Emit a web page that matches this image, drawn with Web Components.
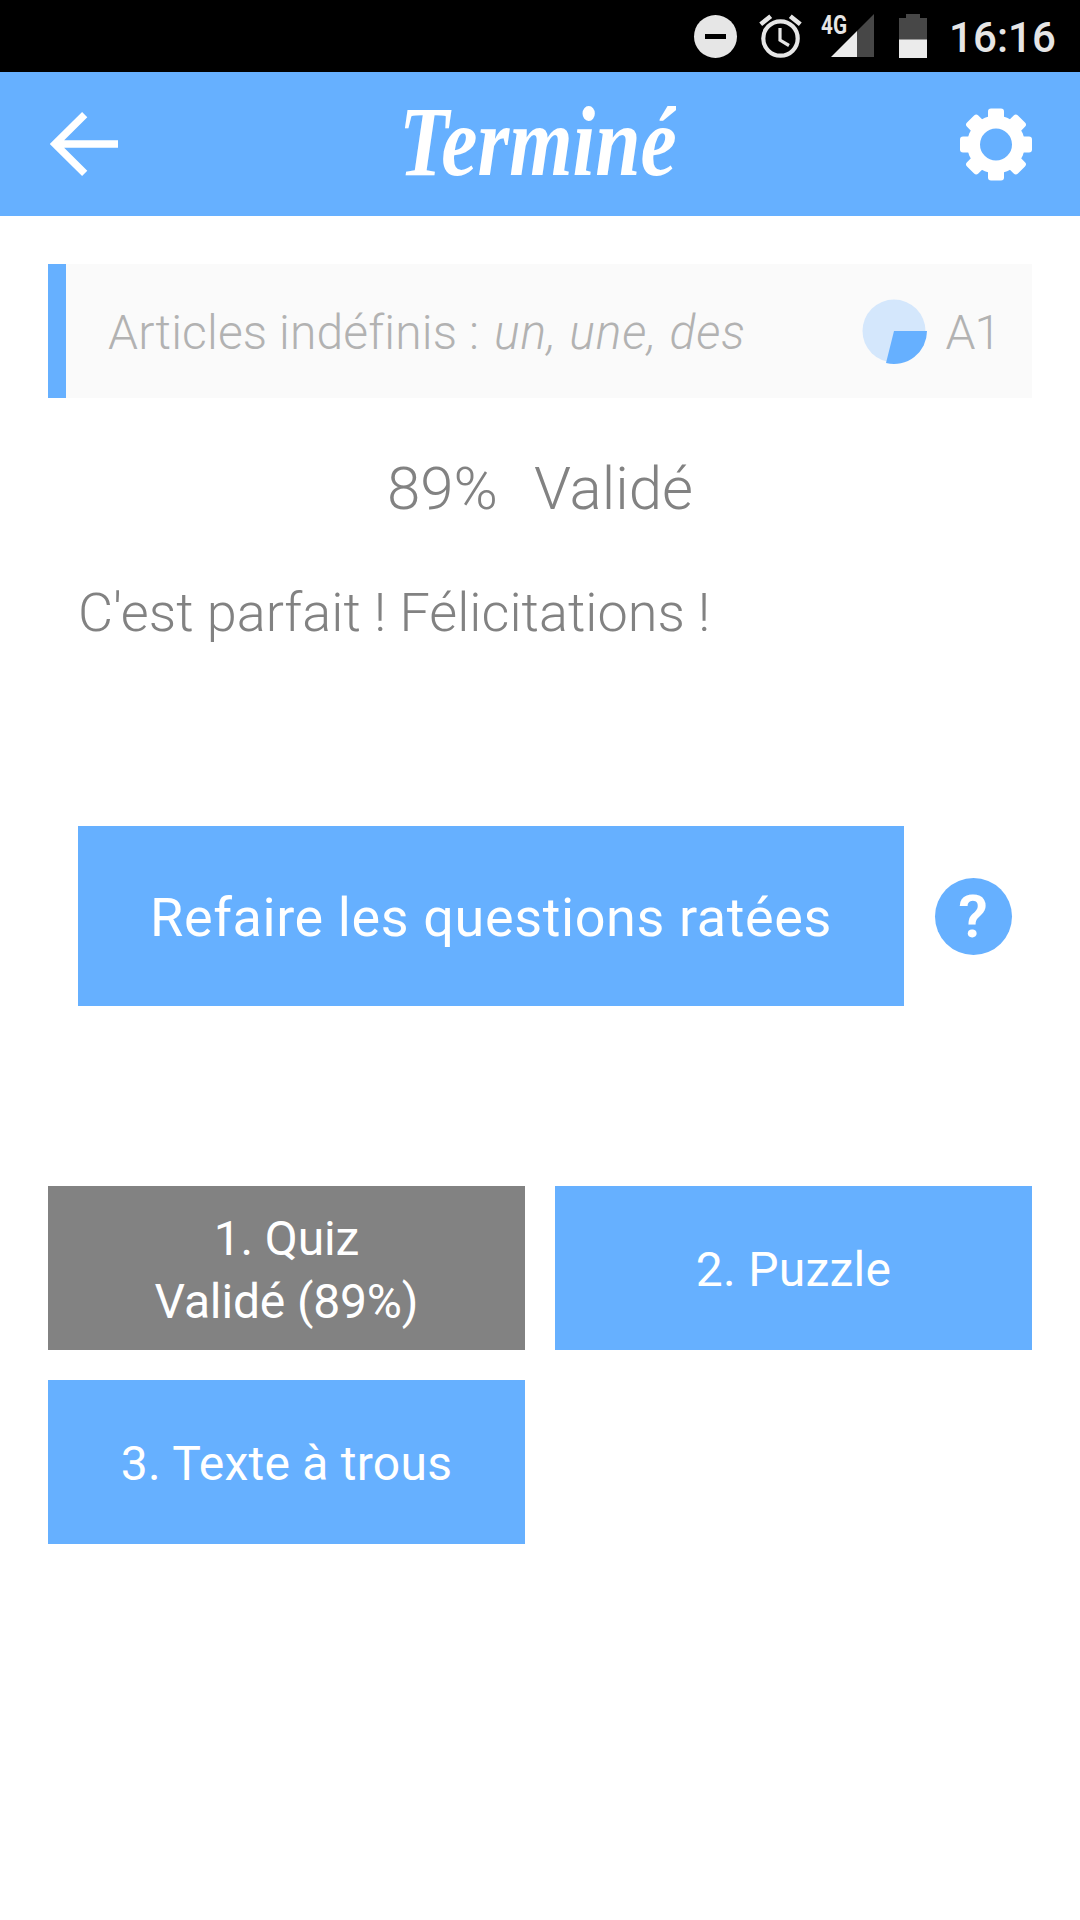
<!DOCTYPE html>
<html lang="fr">
<head>
<meta charset="utf-8">
<title>Terminé</title>
<style>
html,body{margin:0;background:#fff}
body{font-family:Roboto,"Noto Sans",sans-serif}
</style>
</head>
<body>
<quiz-screen></quiz-screen>
<script>
const define = (name, html) => {
  const t = document.createElement('template');
  t.innerHTML = html;
  customElements.define(name, class extends HTMLElement {
    constructor() {
      super();
      this.attachShadow({ mode: 'open' }).append(t.content.cloneNode(true));
    }
  });
};

define('status-bar', `
<style>
:host{display:flex;box-sizing:border-box;height:72px;background:#000;color:#e6e6e6;justify-content:flex-end;align-items:stretch;padding-right:24px}
svg{display:block;flex:none}
.time{width:107px;font-size:42px;line-height:75px;font-weight:500;letter-spacing:.1px;white-space:nowrap;margin-left:22px}
</style>
<svg width="247" height="72" viewBox="680 0 247 72">
<circle cx="715.5" cy="36.5" r="21.5" fill="#e6e6e6"/><rect x="705" y="34" width="21" height="5" fill="#000"/>
<g fill="none" stroke="#e6e6e6"><circle cx="780.5" cy="38.5" r="17.2" stroke-width="4.2"/><path d="M780 28v12.2l9 5.300" stroke-width="3.2"/><path d="M760.700 24.300l10-8M800.300 24.300l-10-8" stroke-width="4.6"/></g>
<path d="M874 14v43h-17V31z" fill="#474747"/><path d="M831 57h26V31z" fill="#ebebeb"/>
<text x="821" y="33.5" font-family="Roboto" font-weight="700" font-size="26" textLength="26" lengthAdjust="spacingAndGlyphs" fill="#e6e6e6">4G</text>
<path d="M899 40V18h7v-4h14v4h7v22z" fill="#474747"/><path d="M899 39.500h28V58h-28z" fill="#ebebeb"/>
</svg>
<span class="time">16:16</span>`);

define('app-header', `
<style>
:host{display:flex;box-sizing:border-box;height:144px;padding:0 48px 0 50px;background:#66b0ff;color:#fff;align-items:center;justify-content:space-between}
svg{display:block;flex:none}
h1{margin:0 0 0 2px;width:272px;height:100px;overflow:hidden;font:italic 700 100px/96px "Liberation Serif",serif;white-space:nowrap}
h1 span{display:block;width:max-content;transform:scaleX(.815);transform-origin:0 50%;margin-left:-5px}
</style>
<svg width="68" height="66" viewBox="50 111 68 66"><path d="M118 144H56M84.700 114.700L55 144l29.700 29.300" fill="none" stroke="#fff" stroke-width="7.400"/></svg>
<h1><span><slot></slot></span></h1>
<svg width="72" height="72" viewBox="-36 -36.500 72 72" overflow="visible" fill="#fff"><path fill-rule="evenodd" d="M0-29a29 29 0 1 0 0 58a29 29 0 1 0 0-58zM0-16a16 16 0 1 1 0 32a16 16 0 1 1 0-32z"/><g><rect x="-8" y="-36" width="16" height="16" rx="3"/><rect x="-8" y="20" width="16" height="16" rx="3"/><rect x="-36" y="-8" width="16" height="16" rx="3"/><rect x="20" y="-8" width="16" height="16" rx="3"/></g><g transform="rotate(45)"><rect x="-8" y="-36" width="16" height="16" rx="3"/><rect x="-8" y="20" width="16" height="16" rx="3"/><rect x="-36" y="-8" width="16" height="16" rx="3"/><rect x="20" y="-8" width="16" height="16" rx="3"/></g></svg>`);

define('lesson-card', `
<style>
:host{display:flex;box-sizing:border-box;height:134px;border-left:18px solid #66b0ff;background:#fafafa;color:#b2b2b2;font-size:48px;font-weight:300;line-height:60px;padding:0 32px 0 42px;align-items:center;white-space:nowrap}
.title{flex:1;padding-top:3px;letter-spacing:.13px}
::slotted(em){letter-spacing:.9px;margin-left:3px}
.level{padding-top:3px;letter-spacing:-1px}
svg{display:block;flex:none;margin-right:17px}
</style>
<span class="title"><slot></slot></span>
<svg width="66" height="68" viewBox="862 297 66 68"><circle cx="894" cy="331" r="31.500" fill="#d4e7fc"/><path d="M894 331h33a33 33 0 0 1-41 32z" fill="#66b0ff"/></svg>
<span class="level"><slot name="level"></slot></span>`);

define('action-tile', `
<style>
:host{display:flex;box-sizing:border-box;padding-top:3px;background:#66b0ff;color:#fff;font-size:48px;line-height:63px;letter-spacing:.25px;text-align:center;align-items:center;justify-content:center;white-space:nowrap}
:host([done]){background:#828282;letter-spacing:-.15px}
</style>
<span><slot></slot></span>`);

define('help-badge', `
<style>
:host{display:flex;width:77px;height:77px;border-radius:50%;background:#66b0ff;color:#fff;align-items:center;justify-content:center;font-size:60px;font-weight:600;line-height:77px}
</style>
<slot></slot>`);

define('quiz-screen', `
<style>
:host{display:flex;flex-direction:column;width:1080px;height:1920px;background:#fff;color:#828282;overflow:hidden}
main{display:flex;flex-direction:column;padding:48px 48px 0}
.score{display:flex;justify-content:center;gap:36px;margin-top:51px;font-size:60px;font-weight:300;line-height:80px}
.message{margin:48px 0 0 30px;font-size:54px;font-weight:300;line-height:72px;letter-spacing:.03px;white-space:pre}
.retry{display:flex;align-items:center;gap:30.5px;margin:177px 0 0 30px}
.retry action-tile{width:826px;height:180px;padding-top:3px;font-size:54px;letter-spacing:.6px}
.grid{display:grid;grid-template-columns:477px 477px;grid-auto-rows:164px;gap:30px;margin-top:180px}
</style>
<status-bar></status-bar>
<app-header>Terminé</app-header>
<main>
<lesson-card>Articles indéfinis : <em>un, une, des</em><span slot="level">A1</span></lesson-card>
<div class="score"><span>89%</span><span>Validé</span></div>
<div class="message">C'est parfait ! Félicitations !</div>
<div class="retry"><action-tile>Refaire les questions ratées</action-tile><help-badge>?</help-badge></div>
<div class="grid"><action-tile done>1. Quiz<br>Validé (89%)</action-tile><action-tile>2. Puzzle</action-tile><action-tile>3. Texte à trous</action-tile></div>
</main>`);
</script>
</body>
</html>
